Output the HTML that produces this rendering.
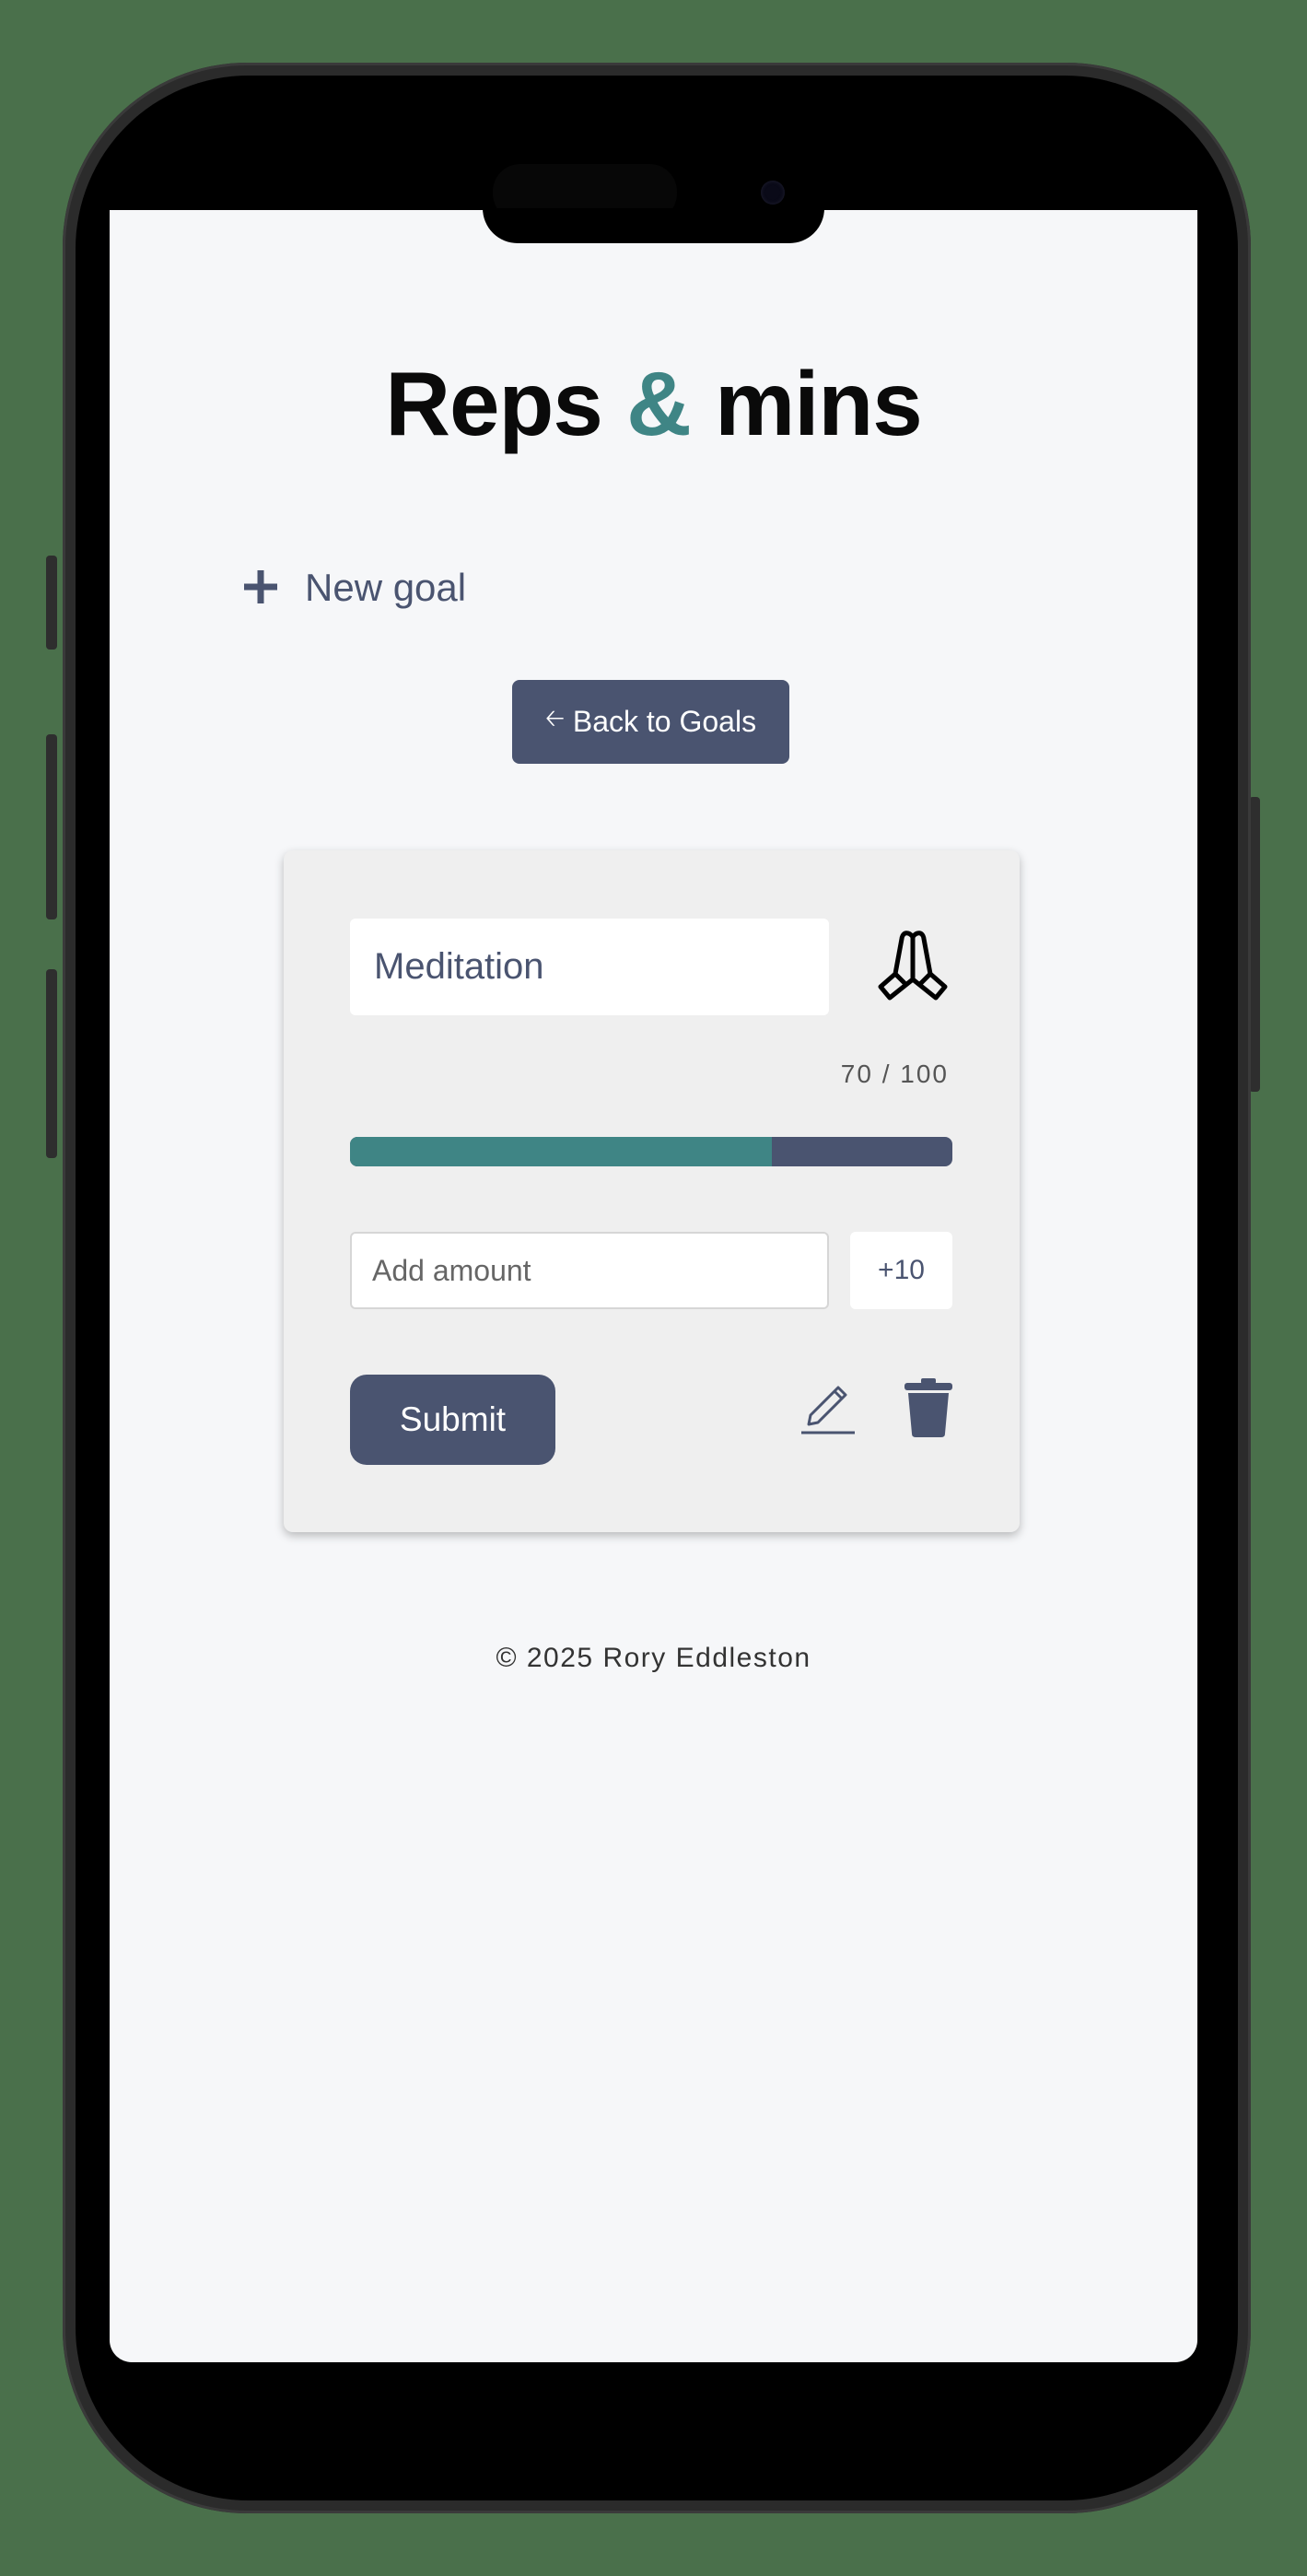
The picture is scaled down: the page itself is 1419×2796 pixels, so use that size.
<!DOCTYPE html>
<html><head><meta charset="utf-8"><style>
*{margin:0;padding:0;box-sizing:border-box}
body{width:1419px;height:2796px;background:#4a704b;position:relative;overflow:hidden;font-family:"Liberation Sans",sans-serif}
.abs{position:absolute}
.frame{left:68px;top:68px;width:1290px;height:2660px;border-radius:200px;background:#2b2b2b;box-shadow:inset 0 0 0 3px #3a3a3a}
.bezel{left:82px;top:82px;width:1262px;height:2632px;border-radius:188px;background:#000}
.screen{left:119px;top:228px;width:1181px;height:2336px;background:#f6f7f9;border-radius:0 0 24px 24px}
.notch{left:524px;top:226px;width:371px;height:38px;background:#000;border-radius:0 0 40px 40px}
.btn{background:#2e2e2e}
.slate{color:#4a5470}
</style></head><body>
<div class="abs btn" style="left:50px;top:603px;width:12px;height:102px;border-radius:4px"></div>
<div class="abs btn" style="left:50px;top:797px;width:12px;height:201px;border-radius:4px"></div>
<div class="abs btn" style="left:50px;top:1052px;width:12px;height:205px;border-radius:4px"></div>
<div class="abs btn" style="left:1356px;top:865px;width:12px;height:320px;border-radius:4px"></div>
<div class="abs frame"></div>
<div class="abs bezel"></div>
<div class="abs" style="left:535px;top:178px;width:200px;height:62px;border-radius:30px;background:#070707"></div>
<div class="abs" style="left:826px;top:196px;width:26px;height:26px;border-radius:50%;background:#0a0a18;box-shadow:inset 0 0 4px #223"></div>
<div class="abs screen"></div>
<div class="abs notch"></div>

<div class="abs" style="left:0;width:1419px;top:380px;text-align:center;font-size:98px;font-weight:bold;letter-spacing:-1px;color:#0a0a0a;line-height:1.2">Reps <span style="color:#3f8585">&amp;</span> mins</div>

<svg class="abs" style="left:263px;top:617px" width="40" height="40" viewBox="0 0 40 40"><path d="M20 2V38M2 20H38" stroke="#4a5470" stroke-width="7"/></svg>
<div class="abs slate" style="left:331px;top:612px;font-size:42px;line-height:52px">New goal</div>

<div class="abs" style="left:556px;top:738px;width:301px;height:91px;background:#4a5470;border-radius:8px;color:#fff;font-size:32px;line-height:91px;text-align:center"><span style="font-size:26px;position:relative;top:-6px">&#129120;</span> Back to Goals</div>

<div class="abs" style="left:308px;top:923px;width:799px;height:740px;background:#efefef;border-radius:10px;box-shadow:0 4px 10px rgba(0,0,0,.25)"></div>
<div class="abs slate" style="left:380px;top:997px;width:520px;height:105px;background:#fff;border-radius:6px;font-size:40px;line-height:105px;padding-left:26px">Meditation</div>
<svg class="abs" style="left:950px;top:1007px" width="82" height="84" viewBox="0 0 82 84" fill="none" stroke="#000" stroke-width="5" stroke-linejoin="round">
<path d="M41 10 C37 4 30 4 29 12 L22 50 L6 64 L16 76 L41 56 Z"/>
<path d="M41 10 C45 4 52 4 53 12 L60 50 L76 64 L66 76 L41 56 Z"/>
<path d="M22 50 L34 62 M60 50 L48 62"/>
</svg>
<div class="abs" style="left:830px;width:200px;top:1150px;text-align:right;font-size:28px;letter-spacing:2px;color:#555">70 / 100</div>
<div class="abs" style="left:380px;top:1234px;width:654px;height:32px;background:#4a5470;border-radius:8px;overflow:hidden"><div style="width:458px;height:32px;background:#3f8585"></div></div>
<div class="abs" style="left:380px;top:1337px;width:520px;height:84px;background:#fff;border:2px solid #d6d6d6;border-radius:6px;font-size:32px;line-height:80px;padding-left:22px;color:#666">Add amount</div>
<div class="abs slate" style="left:923px;top:1337px;width:111px;height:84px;background:#fff;border-radius:6px;font-size:30px;line-height:84px;text-align:center">+10</div>
<div class="abs" style="left:380px;top:1492px;width:223px;height:98px;background:#4a5470;border-radius:18px;color:#fff;font-size:37px;line-height:98px;text-align:center">Submit</div>
<svg class="abs" style="left:868px;top:1498px" width="62" height="60" viewBox="0 0 62 60" fill="none" stroke="#4a5470" stroke-width="3" stroke-linejoin="round">
<path d="M12 38 L42 8 L50 16 L20 46 L10 48 Z M38 12 L46 20"/>
<path d="M2 57 L60 57"/>
</svg>
<svg class="abs" style="left:980px;top:1496px" width="56" height="64" viewBox="0 0 56 64" fill="#4a5470">
<rect x="20" y="0" width="16" height="6" rx="2"/>
<rect x="2" y="5" width="52" height="8" rx="3"/>
<path d="M6 16 H50 L46 60 Q46 64 42 64 H14 Q10 64 10 60 Z"/>
</svg>
<div class="abs" style="left:0;width:1419px;top:1783px;text-align:center;font-size:30px;letter-spacing:1.5px;color:#333">© 2025 Rory Eddleston</div>
</body></html>
